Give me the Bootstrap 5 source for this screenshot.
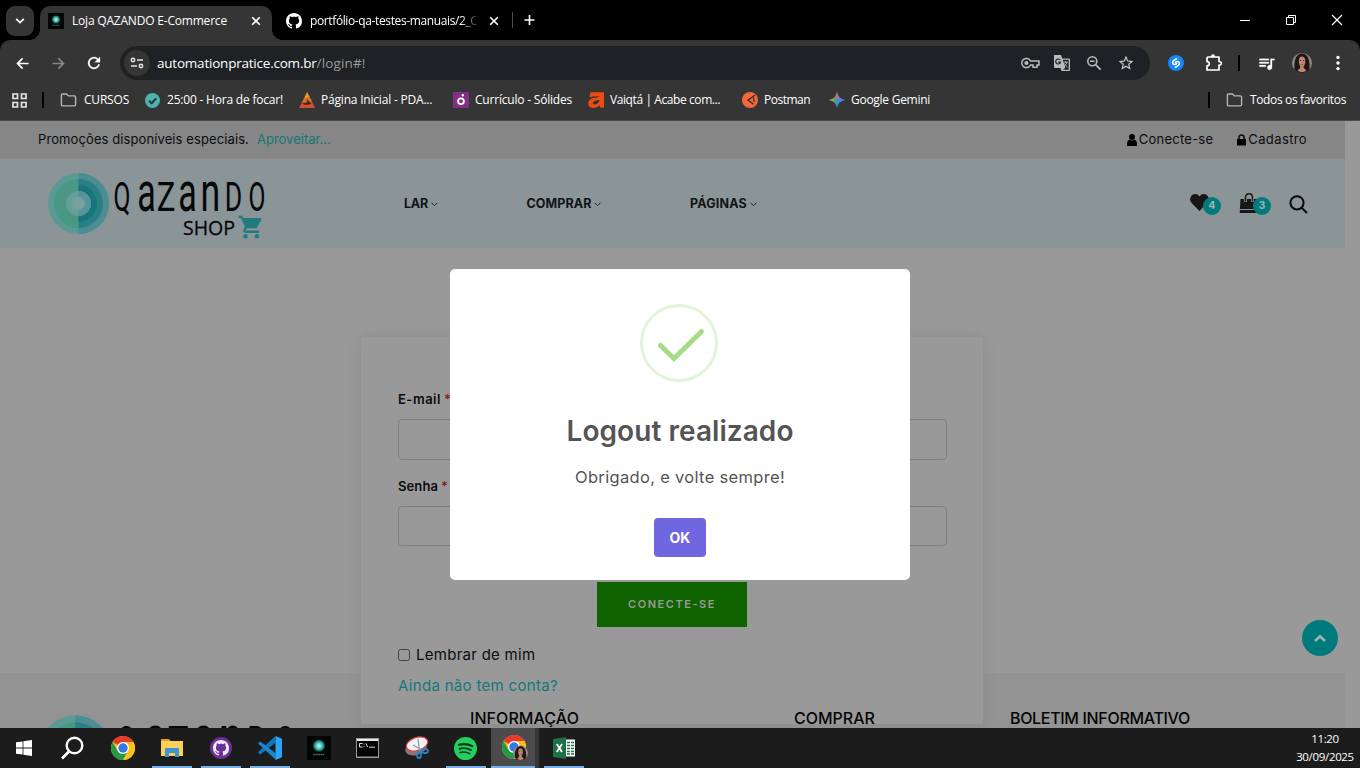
<!DOCTYPE html>
<html lang="pt-br">
<head>
<meta charset="utf-8">
<title>Loja QAZANDO E-Commerce</title>
<link href="https://cdn.jsdelivr.net/npm/bootstrap@5.3.0/dist/css/bootstrap.min.css" rel="stylesheet">
<style>
body{width:1360px;height:768px;overflow:hidden;background:#000;font-family:"Open Sans","Noto Sans",sans-serif;font-size:12px;line-height:1.3;color:#fff}
svg{display:block;flex:none}
.tx{display:inline-block;white-space:pre}
.cell36{width:36px;height:36px;flex:none}
.cell32{width:32px;height:32px;flex:none}
/* browser chrome */
.tabstrip{height:40px}
.tabmenu{width:28px;height:30px;border-radius:9px;background:#353535;margin:6px 6px 4px 6px}
.tab-on{width:232px;height:34px;margin-top:6px;background:#353535;border-radius:10px 10px 0 0;padding:0 11px 5px 8px;position:relative}
.tab-on::before,.tab-on::after{content:"";position:absolute;bottom:0;width:10px;height:10px}
.tab-on::before{left:-10px;background:radial-gradient(circle at 0 0,transparent 9.5px,#353535 10px)}
.tab-on::after{right:-10px;background:radial-gradient(circle at 100% 0,transparent 9.5px,#353535 10px)}
.t1{letter-spacing:-.2px}
.t2{letter-spacing:-.38px}
.tab-off{width:240px;padding:1px 0 0 14px}
.tab-off .ttl{width:171px;overflow:hidden;-webkit-mask-image:linear-gradient(90deg,#000 88%,transparent 99%)}
.tabline{width:1px;height:16px;background:#4a4a4a}
.winbtn{width:46px}
.toolbar{height:46px;background:#353535;border-radius:10px 10px 0 0;padding-left:4px}
.omni{width:1030px;height:34px;border-radius:17px;background:#202124;margin:0 8px;padding:0 8px 0 4px}
.sitebtn{width:26px;height:26px;border-radius:50%;background:#353535;margin-right:7px}
.url{font-size:13.5px;padding-top:1px}
.u1{letter-spacing:-.22px}
.u2{letter-spacing:.15px;color:#9a9a9a}
.vbar{width:2px;height:16px;background:#000}
.bookbar{height:34px;background:#353535;padding:0 14px 6px 12px}
.bk{gap:6px;flex:none}
.bk .tx{letter-spacing:-.2px}
.bk .b5{letter-spacing:-.41px}
.bk .b6{letter-spacing:-.5px}
.bk .b7{letter-spacing:-.27px}
.bk .b8{letter-spacing:-.35px}
.edge{height:1px;background:#4c4c4c}
/* shop page, dimmed by the dialog backdrop */
.page{height:607px;background:#999;font-family:Inter,"Noto Sans",sans-serif;color:#0b0d10;overflow:hidden;position:relative}
.shop{width:1345px}
.promo{height:38px;background:#868686;border-bottom:1px solid #8e8585;padding:0 38px;font-size:13px}
.p1{letter-spacing:.1px}
.p2{margin-left:8px}
.p3{letter-spacing:.25px;margin:0 24px 0 2px}
.p4{letter-spacing:.38px;margin-left:2px}
.teal{color:#13787a}
.head{height:89px;background:#8b9497;padding:0 37px 0 48px}
.brand{margin-top:4px}
.menu{margin-top:1px;font-weight:700;font-size:12.5px;color:#101416}
.m1{width:122.5px;margin-left:139px;letter-spacing:-.2px}
.m2{width:163.5px;letter-spacing:.08px}
.m3{letter-spacing:.19px}
.menu .d-flex{gap:3px}
.tools{margin-top:-1px}
.count{width:18px;height:18px;border-radius:50%;background:#007b7d;color:#a9b3b4;font-size:10px;font-weight:700;position:absolute;left:13px;top:4px}
.bag .count{left:14px}
.stage{height:425px;padding-top:89px}
.login{width:622px;height:387px;margin-left:361px;background:#999;padding:54px 36px 0 37px;box-shadow:0 0 10px #8b8b8b;position:relative;z-index:1}
.login label{font-size:13px;font-weight:600;height:17px;line-height:17px;display:block}
.l1{letter-spacing:.5px}
.l2{letter-spacing:.1px}
.login .form-control{background:#999;border:1px solid #7f7f7f;border-radius:4px;padding:0}
.ast{color:#8b1a1a;margin-left:3px}
.enter{width:150px;height:45px;border:0;border-radius:0;background:#0f6400;color:#999;font-size:11px;font-weight:600;margin:36px 0 0 199px;letter-spacing:1.55px}
.keep{font-size:15px;height:20px;margin-top:18px;letter-spacing:.27px}
.signup{font-size:15px;height:20px;margin-top:11px;letter-spacing:.32px}
.cbox{width:12px;height:12px;border:1px solid #3f3f3f;border-radius:2.5px;margin-right:6px}
.foot{height:55px;background:#939393;font-size:16px;font-weight:500;color:#050505}
.foot>*{position:relative;z-index:2}
.foot .tx{margin-top:35px}
.foot .brand{margin:41px 0 0 39px}
.f1{margin-left:175px;letter-spacing:.07px}
.f2{margin-left:215px}
.f3{margin-left:135px;letter-spacing:-.32px}
.gotop{position:absolute;left:1302px;top:499px;width:36px;height:36px;border-radius:50%;background:#007b7d;z-index:3}
.pop{position:absolute;left:450px;top:148px;width:460px;height:311px;background:#fff;border-radius:5px;z-index:5;color:#545454;padding-top:35px}
.pop h2{font-size:28px;font-weight:600;margin:32px 0 0;line-height:34px;letter-spacing:.06px}
.pop p{font-size:16.5px;margin:16px 0 0;line-height:26px;letter-spacing:.32px}
.okbtn{width:52px;height:39px;background:#7066e0;border:0;border-radius:4px;color:#fff;font-size:14px;font-weight:700;margin-top:28px;padding:0 0 1px}
/* windows taskbar */
.taskbar{height:40px;background:#1c1c1c}
.task{width:49px;height:40px;position:relative;flex:none}
.open::after{content:"";position:absolute;left:5px;right:4px;bottom:0;height:2px;background:#76b0e4}
.now{background:linear-gradient(#4b4b4b,#4b4b4b) 1px 0/44px 40px no-repeat,linear-gradient(#363636,#363636) 45px 0/4px 40px no-repeat}
.now::after{left:1px;right:4px}
.clock{width:70px;font-size:11.5px;line-height:18px;padding-top:2px;letter-spacing:-.33px}
</style>
</head>
<body>
<svg width="0" height="0" class="position-absolute">
 <defs>
  <radialGradient id="glow"><stop offset="0" stop-color="#b6fff3"/><stop offset=".5" stop-color="#4ec9bb"/><stop offset="1" stop-color="#0b4a47"/></radialGradient>
  <linearGradient id="gem" x1="0" y1="0.5" x2="1" y2="0.5"><stop offset="0" stop-color="#e8b93a"/><stop offset=".35" stop-color="#53a56f"/><stop offset=".6" stop-color="#3f86ef"/><stop offset="1" stop-color="#4f8df5"/></linearGradient>
  <symbol id="gh" viewBox="0 0 16 16"><path d="M8 0C3.58 0 0 3.58 0 8c0 3.54 2.29 6.53 5.47 7.59.4.07.55-.17.55-.38 0-.19-.01-.82-.01-1.49-2.01.37-2.53-.49-2.69-.94-.09-.23-.48-.94-.82-1.13-.28-.15-.68-.52-.01-.53.63-.01 1.08.58 1.23.82.72 1.21 1.87.87 2.33.66.07-.52.28-.87.51-1.07-1.78-.2-3.64-.89-3.64-3.95 0-.87.31-1.59.82-2.15-.08-.2-.36-1.02.08-2.12 0 0 .67-.21 2.2.82.64-.18 1.32-.27 2-.27s1.36.09 2 .27c1.53-1.04 2.2-.82 2.2-.82.44 1.1.16 1.92.08 2.12.51.56.82 1.27.82 2.15 0 3.07-1.87 3.75-3.65 3.95.29.25.54.73.54 1.48 0 1.07-.01 1.93-.01 2.2 0 .21.15.46.55.38A8.01 8.01 0 0 0 16 8c0-4.42-3.58-8-8-8"/></symbol>
  <symbol id="x" viewBox="0 0 10 10"><path d="M1.2 1.2l7.6 7.6M8.8 1.2L1.2 8.8" stroke="#fff" stroke-width="1.6"/></symbol>
  <symbol id="folder" viewBox="0 0 16 14"><path d="M.9 11.6V2.3q0-1.300 1.300-1.300H6l1.800 1.900h6q1.300 0 1.300 1.300v7.400q0 1.300-1.300 1.300H2.200q-1.300 0-1.300-1.300z" fill="none" stroke="#b5b5b5" stroke-width="1.400"/></symbol>
  <symbol id="chrome" viewBox="0 0 24 24"><circle cx="12" cy="12" r="12" fill="#fbc116"/><path d="M12 12 1.600 6A12 12 0 0 1 22.400 6H12z" fill="#e33b2e"/><path d="M1.600 6 6.800 15 12 18l-1 5.960A12 12 0 0 1 1.600 6z" fill="#229a48"/><path d="M6.800 15l5.200 3 5.200-3L12 24A12 12 0 0 1 6 22z" fill="#229a48"/><path d="M17.200 15 12 24A12 12 0 0 0 22.400 6H12z" fill="#fbc116"/><circle cx="12" cy="12" r="6" fill="#fff"/><circle cx="12" cy="12" r="4.700" fill="#3577e5"/></symbol>
  <symbol id="face" viewBox="0 0 20 20"><circle cx="10" cy="10" r="10" fill="#8d8883"/><path d="M2.500 16.500Q1.500 1 10 .5 18.500 1 17.500 16.500 14 20 10 20T2.500 16.500z" fill="#211615"/><path d="M6.800 7.500Q7 3.800 9.800 3.500q3.300.3 3.500 4 0 4.500-1.800 6l.3 1.500 2.700 2.500q-4.500 3.500-9 0L8.200 15v-1.500Q6.800 11.500 6.800 7.500z" fill="#bd8873"/><path d="M8.600 11.200q1.400 1.100 2.800 0" stroke="#8b4040" stroke-width=".7" fill="none"/><path d="M7.800 7.500h1.400M10.900 7.500h1.400" stroke="#50332c" stroke-width=".9"/></symbol>
  <symbol id="fav" viewBox="0 0 24 24"><path fill="#020606" d="M0 0h24v24H0z"/><circle cx="12" cy="9.800" r="6" fill="url(#glow)"/><path d="M6.500 18.500h11" stroke="#55706e" stroke-width="1.600" stroke-dasharray="1.300 .5"/></symbol>
  <symbol id="logo" viewBox="0 0 217 68">
   <circle cx="30.500" cy="31.500" r="30.500" fill="#5b9a94"/><path d="M30.500 1a30.500 30.500 0 0 1 0 61z" fill="#4b8d93"/>
   <path d="M30.500 7a24.500 24.500 0 0 0 0 49z" fill="#479983"/><path d="M30.500 7a24.500 24.500 0 0 1 0 49z" fill="#288086"/>
   <path d="M30.500 13a18.500 18.500 0 0 0 0 37z" fill="#4d9684"/><path d="M30.500 13a18.500 18.500 0 0 1 0 37z" fill="#16767b"/>
   <circle cx="30.500" cy="31.500" r="12.500" fill="#659f99"/><path d="M30.500 19a12.500 12.500 0 0 1 0 25z" fill="#54949a"/><circle cx="30.500" cy="31.500" r="6.500" fill="#78a09e"/>
   <g font-family="Roboto" fill="#050708">
    <text font-size="41" transform="translate(65.500 39) scale(.6 1)">Q</text>
    <text font-size="55" transform="translate(89.300 39) scale(.62 1)">a</text>
    <text font-size="41" transform="translate(108.800 39) scale(.76 1)">Z</text>
    <text font-size="55" transform="translate(130.300 39) scale(.62 1)">a</text>
    <text font-size="55" transform="translate(152.600 39) scale(.65 1)">n</text>
    <text font-size="41" transform="translate(176.800 39) scale(.65 1)">D</text>
    <text font-size="41" transform="translate(200.500 39) scale(.6 1)">O</text>
   </g>
   <text x="135" y="62.500" font-family="Open Sans" font-size="20.500" fill="#050708" stroke="#050708" stroke-width=".3" textLength="52" lengthAdjust="spacingAndGlyphs">SHOP</text>
   <path transform="translate(189.500 41.500) scale(1.140)" fill="#1f7b7d" d="M7 18c-1.100 0-1.990.9-1.990 2S5.900 22 7 22s2-.9 2-2-.9-2-2-2zM1 2v2h2l3.600 7.590-1.350 2.450c-.16.28-.25.61-.25.96 0 1.100.9 2 2 2h12v-2H7.420c-.14 0-.25-.11-.25-.25l.03-.12.9-1.630h7.450c.75 0 1.410-.41 1.750-1.030l3.580-6.490c.08-.14.12-.31.12-.48 0-.55-.45-1-1-1H5.210l-.94-2H1zm16 16c-1.100 0-1.990.9-1.990 2s.89 2 1.990 2 2-.9 2-2-.9-2-2-2z"/>
  </symbol>
 </defs>
</svg>

<header>
 <div class="tabstrip d-flex">
  <div class="tabmenu d-flex align-items-center justify-content-center"><svg width="10" height="6" viewBox="0 0 10 6"><path d="M1.200.8 5 4.600 8.800.8" fill="none" stroke="#fff" stroke-width="1.800"/></svg></div>
  <div class="tab-on d-flex align-items-center">
   <svg width="16" height="16" class="me-2"><use href="#fav"/></svg>
   <span class="tx t1">Loja QAZANDO E-Commerce</span>
   <svg width="10" height="10" class="ms-auto"><use href="#x"/></svg>
  </div>
  <div class="tab-off d-flex align-items-center">
   <svg width="16" height="16" fill="#fff"><use href="#gh"/></svg>
   <div class="ttl ms-2"><span class="tx t2">portfólio-qa-testes-manuais/2_C</span></div>
   <svg width="10" height="10" class="ms-2"><use href="#x"/></svg>
  </div>
  <div class="d-flex align-items-center"><div class="tabline"></div><svg class="ms-2" width="16" height="14" viewBox="0 0 16 14"><path d="M8.500 2v10M3.500 7h10" stroke="#fff" stroke-width="1.600"/></svg></div>
  <div class="ms-auto d-flex align-items-center">
   <svg class="winbtn" height="12" viewBox="0 0 46 12"><path d="M18 6.500h10" stroke="#fff"/></svg>
   <svg class="winbtn" height="12" viewBox="0 0 46 12"><path d="M18.500 3.500h7v7h-7zM20.500 3V1.500h7v7H26" fill="none" stroke="#fff"/></svg>
   <svg class="winbtn" height="12" viewBox="0 0 46 12"><path d="M18 1l10 10M28 1L18 11" stroke="#fff" stroke-width="1.200"/></svg>
  </div>
 </div>
 <div class="toolbar d-flex align-items-center">
  <div class="cell36 d-flex align-items-center justify-content-center"><svg width="17" height="17" viewBox="0 0 24 24"><path fill="#fff" d="M20.500 10.800H7.830l5.090-5.090L11.300 4l-8 8 8 8 1.710-1.700L7.830 13.200H20.500z"/></svg></div>
  <div class="cell36 d-flex align-items-center justify-content-center"><svg width="17" height="17" viewBox="0 0 24 24"><path fill="#848484" d="M3.500 10.800h12.670l-5.090-5.090L12.700 4l8 8-8 8-1.710-1.700 5.180-5.100H3.500z"/></svg></div>
  <div class="cell36 d-flex align-items-center justify-content-center"><svg width="18" height="18" viewBox="0 0 24 24"><path fill="#fff" stroke="#fff" stroke-width=".4" d="M17.650 6.350C16.200 4.900 14.210 4 12 4c-4.420 0-7.990 3.580-7.990 8s3.570 8 7.990 8c3.730 0 6.840-2.550 7.730-6h-2.080c-.82 2.330-3.040 4-5.650 4-3.310 0-6-2.690-6-6s2.690-6 6-6c1.660 0 3.140.69 4.220 1.780L13 11h7V4l-2.350 2.350z"/></svg></div>
  <div class="omni d-flex align-items-center">
   <div class="sitebtn d-flex align-items-center justify-content-center"><svg width="14" height="12" viewBox="0 0 14 12"><g fill="none" stroke="#e3e3e3" stroke-width="1.500"><circle cx="3" cy="3" r="1.700"/><path d="M7 3h6M1 9h6"/><circle cx="11" cy="9" r="1.700"/></g></svg></div>
   <span class="url"><span class="tx u1">automationpratice.com.br</span><span class="tx u2">/login#!</span></span>
   <div class="ms-auto d-flex">
    <div class="cell32 d-flex align-items-center justify-content-center"><svg width="19" height="12" viewBox="0 0 19 12"><g fill="none" stroke="#b9babc" stroke-width="1.500"><path d="M9.500 4A4.600 4.600 0 1 0 9.500 8H12v2.200h4V8h2V4z"/><circle cx="5.400" cy="6" r="1.300" fill="#b9babc"/></g></svg></div>
    <div class="cell32 d-flex align-items-center justify-content-center"><svg width="18" height="18" viewBox="0 0 18 18"><path fill="#b9babc" d="M1 1h7l1.200 3.500H16a1 1 0 0 1 1 1V16a1 1 0 0 1-1 1H8.500L7.500 14H2a1 1 0 0 1-1-1z"/><path fill="#202124" d="M9.700 5.800H15.700v9.900H10l2.300-2z"/><path d="M7.200 6A2.500 2.500 0 1 0 7.600 8.200H5.200" fill="none" stroke="#202124" stroke-width="1.200"/><path d="M10.500 8.200h4.500M12.700 7v1.200M14 8.200q-.6 2.500-3 4M11.500 9.500q1 2.500 3 3.600" fill="none" stroke="#b9babc" stroke-width=".9"/></svg></div>
    <div class="cell32 d-flex align-items-center justify-content-center"><svg width="16" height="16" viewBox="0 0 16 16"><g fill="none" stroke="#b9babc" stroke-width="1.600"><circle cx="6.300" cy="6.300" r="4.500"/><path d="M9.600 9.600l5 5M4 6.300h4.600"/></g></svg></div>
    <div class="cell32 d-flex align-items-center justify-content-center"><svg width="18" height="18" viewBox="0 0 24 24"><path fill="#c7c8ca" d="M22 9.240l-7.190-.62L12 2 9.190 8.630 2 9.240l5.460 4.730L5.820 21 12 17.270 18.180 21l-1.630-7.030L22 9.240zM12 15.400l-3.760 2.270 1-4.280-3.320-2.880 4.380-.38L12 6.100l1.710 4.040 4.380.38-3.320 2.880 1 4.280L12 15.400z"/></svg></div>
   </div>
  </div>
  <div class="cell36 d-flex align-items-center justify-content-center"><svg width="16" height="16" viewBox="0 0 16 16"><circle cx="8" cy="8" r="8" fill="#1687f8"/><path d="M8.600 3.700 5.700 5.700Q3.600 7.400 5.400 9.100q1.500 1 3.200-.5M7.400 12.300l2.900-2q2.100-1.700.3-3.400-1.500-1-3.200.5" fill="none" stroke="#fff" stroke-width="1.500" stroke-linecap="round"/></svg></div>
  <div class="cell36 d-flex align-items-center justify-content-center ps-1"><svg width="18" height="18" viewBox="0 0 18 18"><path d="M2 4.200q0-1.200 1.200-1.200H14v4.500q2.300 0 2.300 1.800T14 11v5H2v-4.200q2.300 0 2.300-2T2 7.700z" fill="none" stroke="#fff" stroke-width="1.700" stroke-linejoin="round"/><path d="M6 3V2q.2-1.700 2-1.700T10 2v1z" fill="#fff"/></svg></div>
  <div class="vbar ms-2"></div>
  <div class="cell36 ms-2 d-flex align-items-center justify-content-center"><svg width="19" height="19" viewBox="0 0 24 24"><path fill="#fff" stroke="#fff" stroke-width=".3" d="M15 6H3v2h12V6zm0 4H3v2h12v-2zM3 16h8v-2H3v2zM17 6v8.180c-.31-.11-.65-.18-1-.18-1.660 0-3 1.340-3 3s1.340 3 3 3 3-1.340 3-3V8h3V6h-5z"/></svg></div>
  <div class="cell36 d-flex align-items-center justify-content-center"><svg width="20" height="20"><use href="#face"/></svg></div>
  <div class="cell36 d-flex align-items-center justify-content-center"><svg width="4" height="16" viewBox="0 0 4 16" fill="#fff"><circle cx="2" cy="2.400" r="1.700"/><circle cx="2" cy="8" r="1.700"/><circle cx="2" cy="13.600" r="1.700"/></svg></div>
 </div>
 <div class="bookbar d-flex align-items-center">
  <svg width="15" height="15" viewBox="0 0 15 15"><path d="M1 1h4.500v4.500H1zM9.500 1H14v4.500H9.500zM1 9.500h4.500V14H1zM9.500 9.500H14V14H9.500z" fill="none" stroke="#e6e6e6" stroke-width="1.700"/></svg>
  <div class="vbar" style="margin:0 16px 0 15px"></div>
  <div class="bk d-flex align-items-center" style="width:85px;gap:7px"><svg width="17" height="14"><use href="#folder"/></svg><span class="tx">CURSOS</span></div>
  <div class="bk d-flex align-items-center" style="width:154px;gap:7px"><svg width="15" height="15" viewBox="0 0 15 15"><circle cx="7.500" cy="7.500" r="7.500" fill="#4fb3ac"/><path d="M4 7.600l2.600 2.600 4.600-4.800" fill="none" stroke="#24383a" stroke-width="2"/></svg><span class="tx">25:00 - Hora de focar!</span></div>
  <div class="bk d-flex align-items-center" style="width:154px"><svg width="16" height="16" viewBox="0 0 16 16"><path d="M8 0l3 5.500-6 1z" fill="#e99a2b"/><path d="M5 6.200l6-.7 2.300 4.300L3 10z" fill="#e0752b"/><path d="M3 10l10-.5L16 16H0z" fill="#d2522d"/><path d="M2.500 11.500l6-1-1-4 5 5.500-6 1z" fill="#3c2a22"/></svg><span class="tx">Página Inicial - PDA...</span></div>
  <div class="bk d-flex align-items-center" style="width:135px"><svg width="16" height="16" viewBox="0 0 16 16"><path fill="#822f86" d="M0 0h16v16H0z"/><circle cx="8" cy="9.300" r="2.900" fill="none" stroke="#fff" stroke-width="1.800"/><circle cx="9.800" cy="3.300" r="1.200" fill="#fff"/></svg><span class="tx">Currículo - Sólides</span></div>
  <div class="bk d-flex align-items-center" style="width:154px"><svg width="16" height="16" viewBox="0 0 16 16"><path d="M2.500.3H16v15.200h-4.200v-2.300Q8.500 16.500 4 15.800.2 15 .2 11.300.5 6.500 7 5.800q3-.3 4.800-1.300-5-.8-10.300.8zM11.800 8Q5 8.300 4.800 11q.3 2 3 1.300 3-.9 4-4.300z" fill="#f04a14" fill-rule="evenodd"/></svg><span class="tx b5">Vaiqtá | Acabe com...</span></div>
  <div class="bk d-flex align-items-center" style="width:87px"><svg width="16" height="16" viewBox="0 0 16 16"><circle cx="8" cy="8" r="8" fill="#f2683c"/><path d="M13 3 6 8.200l5.500 4M11.500 5.500l.6 4.500" fill="none" stroke="#3a2a26" stroke-width="1.300"/></svg><span class="tx b6">Postman</span></div>
  <div class="bk d-flex align-items-center"><svg width="16" height="16" viewBox="0 0 16 16"><path d="M8 0q1.200 6.800 8 8-6.800 1.200-8 8-1.200-6.800-8-8 6.800-1.200 8-8z" fill="url(#gem)"/><path d="M8 0q.7 3.500 2.600 5.400L8 7 5.400 5.400Q7.300 3.500 8 0z" fill="#e2655c" opacity=".8"/></svg><span class="tx b7">Google Gemini</span></div>
  <div class="vbar ms-auto"></div>
  <div class="bk d-flex align-items-center ms-3" style="gap:7px"><svg width="17" height="14"><use href="#folder"/></svg><span class="tx b8">Todos os favoritos</span></div>
 </div>
 <div class="edge"></div>
</header>

<main class="page">
 <div class="shop">
  <div class="promo d-flex align-items-center">
   <span class="tx p1">Promoções disponíveis especiais.</span><span class="tx p2 teal">Aproveitar...</span>
   <svg class="ms-auto" width="10" height="12" viewBox="0 0 10 12"><circle cx="5" cy="3" r="3"/><path d="M0 12V9.500Q0 6.500 2.500 5.500q2.500 2 5 0Q10 6.500 10 9.500V12z"/></svg><span class="tx p3">Conecte-se</span>
   <svg width="9" height="12" viewBox="0 0 9 12"><path d="M0 5h9v6.500H0z"/><path d="M2 5.500V3.500q0-2.500 2.500-2.500T7 3.500v2" fill="none" stroke="#0b0d10" stroke-width="1.500"/></svg><span class="tx p4">Cadastro</span>
  </div>
  <div class="head d-flex align-items-center">
   <svg class="brand" width="217" height="68"><use href="#logo"/></svg>
   <nav class="menu d-flex align-items-center" style="gap:0">
    <div class="d-flex align-items-center m1"><span class="tx">LAR</span><svg width="7" height="5" viewBox="0 0 7 5"><path d="M.5.7 3.500 3.700 6.500.7" fill="none" stroke="#222"/></svg></div>
    <div class="d-flex align-items-center m2"><span class="tx">COMPRAR</span><svg width="7" height="5" viewBox="0 0 7 5"><path d="M.5.7 3.500 3.700 6.500.7" fill="none" stroke="#222"/></svg></div>
    <div class="d-flex align-items-center m3"><span class="tx">PÁGINAS</span><svg width="7" height="5" viewBox="0 0 7 5"><path d="M.5.7 3.500 3.700 6.500.7" fill="none" stroke="#222"/></svg></div>
   </nav>
   <div class="tools ms-auto d-flex align-items-start">
    <div class="position-relative" style="width:49px"><svg style="margin-top:1px" width="19" height="17" viewBox="0 0 19 17"><path d="M9.500 17 1.400 8.800Q-.6 6 .6 3.200 2.200 0 5.200 0q2.800 0 4.300 2.400Q11 0 13.800 0q3 0 4.600 3.200 1.200 2.800-.8 5.600z" fill="#171717"/></svg><span class="count d-flex align-items-center justify-content-center">4</span></div>
    <div class="position-relative bag" style="width:50px"><svg width="20" height="20" viewBox="0 0 20 20"><path d="M1.500 6h17l.6 10H.9zM.8 17h18.400v3H.8z" fill="#171717"/><path d="M6.500 9V4.500q0-3.700 3.500-3.700t3.500 3.700V9" fill="none" stroke="#8b9497" stroke-width="3"/><path d="M6.500 8.500V4.500q0-3.700 3.500-3.700t3.500 3.700v4" fill="none" stroke="#171717" stroke-width="1.400"/></svg><span class="count d-flex align-items-center justify-content-center">3</span></div>
    <svg style="margin-top:2px" width="19" height="19" viewBox="0 0 19 19"><g fill="none" stroke="#070707" stroke-width="2"><circle cx="8" cy="7.800" r="6.600"/><path d="M12.600 12.600l5.300 5.400"/></g></svg>
   </div>
  </div>
  <section class="stage">
   <form class="login">
    <label><span class="tx l1">E-mail</span><span class="ast">*</span></label>
    <input class="form-control" style="height:41px;margin-top:11px">
    <label style="margin-top:18px"><span class="tx l2">Senha</span><span class="ast">*</span></label>
    <input class="form-control" style="height:40px;margin-top:11px">
    <button type="button" class="btn enter d-flex align-items-center justify-content-center">CONECTE-SE</button>
    <div class="keep d-flex align-items-center"><span class="cbox"></span><span class="tx">Lembrar de mim</span></div>
    <div class="signup d-flex align-items-center teal"><span class="tx">Ainda não tem conta?</span></div>
   </form>
  </section>
  <footer class="foot d-flex align-items-start">
   <svg class="brand" width="256" height="80"><use href="#logo"/></svg>
   <span class="tx f1">INFORMAÇÃO</span><span class="tx f2">COMPRAR</span><span class="tx f3">BOLETIM INFORMATIVO</span>
  </footer>
 </div>
 <a class="gotop d-flex align-items-center justify-content-center"><svg width="14" height="9" viewBox="0 0 14 9"><path d="M2 7l5-4.700L12 7" fill="none" stroke="#a3b1b1" stroke-width="2.800"/></svg></a>
 <div class="pop d-flex flex-column align-items-center" role="dialog">
  <svg width="80" height="78" viewBox="0 0 80 78" style="margin-right:2px"><circle cx="40" cy="39" r="37.500" fill="none" stroke="#a5dc86" stroke-opacity=".32" stroke-width="3"/><path d="M21.500 41.500 35 54.500 62.500 27.500" fill="none" stroke="#a5dc86" stroke-width="5" stroke-linecap="round"/></svg>
  <h2>Logout realizado</h2>
  <p>Obrigado, e volte sempre!</p>
  <button class="btn okbtn">OK</button>
 </div>
</main>

<footer class="taskbar d-flex">
 <div class="task d-flex align-items-center justify-content-center" style="width:48px"><svg width="16" height="16" viewBox="0 0 16 16"><path fill="#fff" d="M0 2.300 6.600 1.400v6.200H0zM7.400 1.300 16 0v7.600H7.400zM0 8.400h6.600v6.200L0 13.700zM7.400 8.400H16V16l-8.600-1.300z"/></svg></div>
 <div class="task d-flex align-items-center justify-content-center" style="width:50px"><svg width="24" height="24" viewBox="0 0 24 24"><circle cx="13.500" cy="9.500" r="7.800" fill="none" stroke="#fff" stroke-width="2.400"/><path d="M8 15.500 1 22.500" stroke="#fff" stroke-width="2.600"/></svg></div>
 <div class="task d-flex align-items-center justify-content-center"><svg width="24" height="24"><use href="#chrome"/></svg></div>
 <div class="task open d-flex align-items-center justify-content-center"><svg width="22" height="20" viewBox="0 0 22 20"><path d="M0 1h8l2 2.500H0z" fill="#e3a21a"/><path d="M0 3h22v15H0z" fill="#fbd05c"/><path d="M4 19v-8q0-1 1-1h12q1 0 1 1v8h-4v-4H8v4z" fill="#4193cf"/></svg></div>
 <div class="task open d-flex align-items-center justify-content-center"><svg width="22" height="22" viewBox="0 0 22 22"><circle cx="11" cy="11" r="11" fill="#6e2f96"/><use href="#gh" x="3" y="3" width="16" height="16" fill="#f2eef6"/></svg></div>
 <div class="task open d-flex align-items-center justify-content-center"><svg width="24" height="24" viewBox="0 0 24 24"><path d="M17.500 0 24 2.800v18.400L17.500 24z" fill="#2aa5f3"/><path d="M17.500 0 1 15.200 0 16.500l2.200 2L18 6.500z" fill="#1376bd"/><path d="M0 7.500 2.200 5.500 18 17.500V24z" fill="#1a86d2"/></svg></div>
 <div class="task d-flex align-items-center justify-content-center"><svg width="24" height="24"><use href="#fav"/></svg></div>
 <div class="task d-flex align-items-center justify-content-center"><svg width="23" height="20" viewBox="0 0 23 20"><path fill="#9a9a9a" d="M0 0h23v20H0z"/><path fill="#e9e9e9" d="M1 1h21v2H1z"/><path fill="#050505" d="M1 3h21v15.500H1z"/><path d="M6.500 5.500H3.500V9h3M8 5.700v.8M8 8.200V9M10 5.300 11.500 9M13 9.200h6" stroke="#ddd" fill="none"/></svg></div>
 <div class="task d-flex align-items-center justify-content-center"><svg width="24" height="24" viewBox="0 0 24 24"><ellipse cx="11" cy="12" rx="11" ry="7" fill="#8d7577" transform="rotate(-18 11 12)"/><ellipse cx="12" cy="8" rx="11" ry="6.500" fill="#f5f1f2" stroke="#d8434f" stroke-width="1.200" transform="rotate(-18 12 8)"/><path d="M13 3l1.500 12M8 9l9 5" stroke="#8798a5" stroke-width="1.200"/><g fill="none" stroke="#2b83c3" stroke-width="1.800"><ellipse cx="14" cy="19" rx="2" ry="3"/><ellipse cx="20" cy="15" rx="3" ry="2"/></g></svg></div>
 <div class="task open d-flex align-items-center justify-content-center"><svg width="23" height="23" viewBox="0 0 23 23"><circle cx="11.500" cy="11.500" r="11.500" fill="#23cf5f"/><g fill="none" stroke="#10361d" stroke-linecap="round"><path d="M5 7.800q7-2 13.300 1.300" stroke-width="2.200"/><path d="M5.500 11.800q6.200-1.700 11.500 1.200" stroke-width="1.900"/><path d="M6 15.500q5.200-1.300 9.800 1.100" stroke-width="1.500"/></g></svg></div>
 <div class="task open now d-flex align-items-center justify-content-center"><svg width="27" height="26" viewBox="0 0 27 26"><use href="#chrome" x="1" y="0" width="24" height="24"/><use href="#face" x="12" y="10" width="15" height="16"/></svg></div>
 <div class="task open d-flex align-items-center justify-content-center"><svg width="22" height="22" viewBox="0 0 22 22"><path fill="#fff" d="M12 2.500h10v17H12z"/><path d="M14 5.500h7M14 8.500h7M14 11.500h7M14 14.500h7M14 17h7" stroke="#217346" stroke-width="1.500"/><path d="M17.500 4v14" stroke="#fff"/><path fill="#1e7145" d="M0 2l13-2v22L0 20z"/><path d="M3.800 7l5.200 8M9 7l-5.200 8" stroke="#fff" stroke-width="1.800"/></svg></div>
 <div class="clock ms-auto d-flex flex-column align-items-center"><span class="tx">11:20</span><span class="tx">30/09/2025</span></div>
</footer>
<script src="https://cdn.jsdelivr.net/npm/bootstrap@5.3.0/dist/js/bootstrap.bundle.min.js"></script>
</body>
</html>
